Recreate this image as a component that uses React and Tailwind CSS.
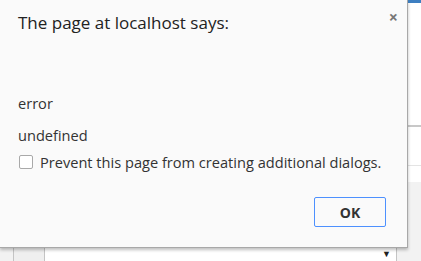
import React from "react";

const font = { fontFamily: '"Open Sans", "Noto Sans", sans-serif' };

export default function App() {
  return (
    <div
      className="relative w-[421px] h-[261px] overflow-hidden bg-[#f2f2f2]"
      style={font}
    >
      {/* page behind the dialog */}
      <div className="flex flex-col h-full">
        <div className="h-[3px] bg-[#3d7fc1]" />
        <div className="h-[124px] bg-white border-b-2 border-[#c8c8c8]" />
        <div className="h-[39px] bg-white border-b border-[#e4e4e4]" />
        <div className="h-[16px] bg-white" />
        <div className="flex-1 flex flex-col justify-end pl-[13px] pr-[24px]">
          <div className="flex h-[14px] border-l border-r border-[#c4c4c4] bg-white">
            <div className="w-[31px] bg-[#efefef] border-r border-[#c4c4c4]" />
            <div className="flex-1 flex justify-end items-start pr-[5px] text-[9px] leading-[14px] text-[#222]">
              ▼
            </div>
          </div>
        </div>
      </div>

      {/* alert dialog */}
      <div className="absolute left-0 top-0 w-[408px] h-[248px] bg-[#fafafa] border-r border-b border-[#a8a8a8] shadow-[0_2px_3px_rgba(0,0,0,0.25)] flex flex-col px-[18px] text-[#333]">
        <button className="absolute right-[9px] top-[9px] text-[16px] leading-none text-[#777] font-bold">
          ×
        </button>
        <div className="pt-[10px] text-[17px] leading-[26px] text-[#222]">
          The page at localhost says:
        </div>
        <div className="mt-[58px] text-[14.6px] leading-[18px]">error</div>
        <div className="mt-[14px] text-[14.6px] leading-[18px]">undefined</div>
        <label className="mt-[9px] flex items-center gap-[7px] text-[14.6px] leading-[18px]">
          <span className="ml-[1px] w-[14px] h-[14px] rounded-[2px] border border-[#a9a9a9] bg-white" />
          Prevent this page from creating additional dialogs.
        </label>
        <div className="flex justify-end mt-[26px] pr-[3px]">
          <button className="w-[72px] h-[30px] rounded-[2px] border border-[#4d90fe] bg-[#fafafa] text-[14px] font-bold text-[#333]">
            OK
          </button>
        </div>
      </div>
    </div>
  );
}
